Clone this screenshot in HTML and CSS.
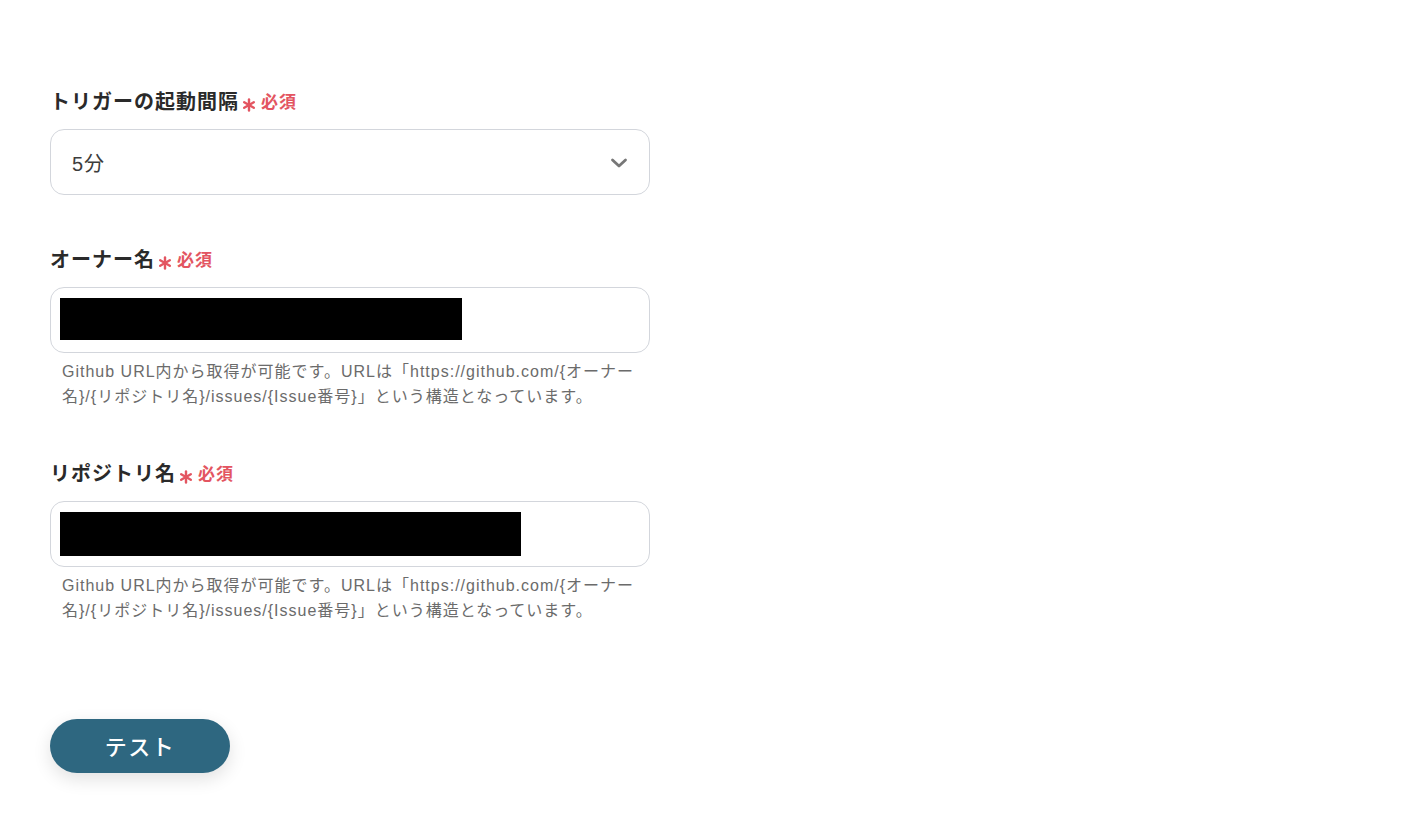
FILE: index.html
```html
<!DOCTYPE html>
<html lang="ja">
<head>
<meta charset="utf-8">
<title>Form</title>
<link rel="stylesheet" href="styles.css">
</head>
<body>
<main class="form">
  <section class="field">
    <div class="label">トリガーの起動間隔<span class="req"><svg class="star" width="14" height="14" viewBox="0 0 14 14"><g stroke="#e35561" stroke-width="2.4" stroke-linecap="round"><path d="M7 1.5 V12.5"/><path d="M2.2 4.2 L11.8 9.8"/><path d="M2.2 9.8 L11.8 4.2"/></g></svg>必須</span></div>
    <div class="select">
      <span class="value">5分</span>
      <svg class="chevron" width="18" height="12" viewBox="0 0 18 12"><path d="M2.5 3 L9 9 L15.5 3" fill="none" stroke="#777" stroke-width="2.8" stroke-linecap="round" stroke-linejoin="round"/></svg>
    </div>
  </section>
  <section class="field">
    <div class="label">オーナー名<span class="req"><svg class="star" width="14" height="14" viewBox="0 0 14 14"><g stroke="#e35561" stroke-width="2.4" stroke-linecap="round"><path d="M7 1.5 V12.5"/><path d="M2.2 4.2 L11.8 9.8"/><path d="M2.2 9.8 L11.8 4.2"/></g></svg>必須</span></div>
    <div class="input"><div class="redact redact-a"></div></div>
    <p class="help">Github URL内から取得が可能です。URLは「https://github.com/{オーナー名}/{リポジトリ名}/issues/{Issue番号}」という構造となっています。</p>
  </section>
  <section class="field">
    <div class="label">リポジトリ名<span class="req"><svg class="star" width="14" height="14" viewBox="0 0 14 14"><g stroke="#e35561" stroke-width="2.4" stroke-linecap="round"><path d="M7 1.5 V12.5"/><path d="M2.2 4.2 L11.8 9.8"/><path d="M2.2 9.8 L11.8 4.2"/></g></svg>必須</span></div>
    <div class="input"><div class="redact redact-b"></div></div>
    <p class="help">Github URL内から取得が可能です。URLは「https://github.com/{オーナー名}/{リポジトリ名}/issues/{Issue番号}」という構造となっています。</p>
  </section>
  <div class="actions">
    <button class="btn">テスト</button>
  </div>
</main>
</body>
</html>
```
FILE: styles.css
```css
* { box-sizing: border-box; }
html, body { margin: 0; padding: 0; background: #fff; }
body {
  font-family: "Liberation Sans", "Noto Sans CJK JP", sans-serif;
  color: #333;
}
.form {
  width: 600px;
  margin-left: 50px;
  padding-top: 87px;
  display: flex;
  flex-direction: column;
}
.field { display: flex; flex-direction: column; }
.field + .field { margin-top: 50px; }
.label {
  font-size: 20px;
  font-weight: 700;
  letter-spacing: 1px;
  line-height: 28px;
  height: 29px;
  padding-top: 1px;
  color: #2a2a2a;
  display: flex;
  align-items: center;
  margin-bottom: 13px;
}
.req {
  color: #e35561;
  font-size: 17px;
  font-weight: 700;
  letter-spacing: 1px;
  margin-left: 3px;
  display: inline-flex;
  align-items: center;
  position: relative;
  top: 1px;
}
.star {
  margin-right: 5px;
  position: relative;
  top: 2px;
}
.select, .input {
  height: 66px;
  border: 1px solid #d3d6dc;
  border-radius: 14px;
  background: #fff;
  display: flex;
  align-items: center;
}
.select {
  padding: 0 21px;
  justify-content: space-between;
}
.value { font-size: 20px; letter-spacing: 1px; color: #3c3c3c; }
.chevron { margin-right: 0; margin-top: 2px; }
.input { padding-left: 9px; }
.redact { background: #000; }
.redact-a { width: 402px; height: 42px; margin-top: -2px; }
.redact-b { width: 461px; height: 44px; margin-top: 0; }
.help {
  margin: 6px 0 0;
  padding: 0 0 0 12px;
  font-size: 16px;
  letter-spacing: 1px;
  line-height: 25px;
  color: #6b6b6b;
}
.actions { margin-top: 96px; padding-bottom: 40px; }
.btn {
  width: 180px;
  height: 54px;
  border: none;
  border-radius: 27px;
  background: #2e6780;
  color: #fff;
  font-family: "Noto Sans CJK JP", sans-serif;
  font-size: 22px;
  font-weight: 500;
  letter-spacing: 1.5px;
  padding: 0 0 3px;
  line-height: 1;
  box-shadow: 0 6px 18px rgba(0, 0, 0, 0.12);
  cursor: pointer;
}
```
